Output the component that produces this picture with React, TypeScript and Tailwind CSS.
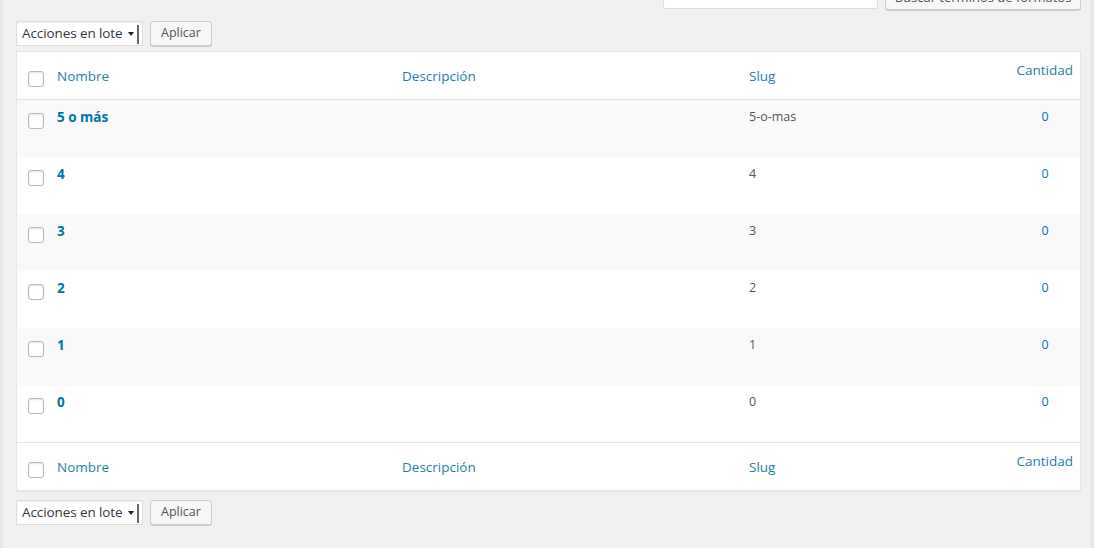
import React from 'react';

const terms = [
  { name: '5 o más', slug: '5-o-mas', count: 0 },
  { name: '4', slug: '4', count: 0 },
  { name: '3', slug: '3', count: 0 },
  { name: '2', slug: '2', count: 0 },
  { name: '1', slug: '1', count: 0 },
  { name: '0', slug: '0', count: 0 },
];

const cols = 'grid grid-cols-[31px_345px_347px_268px_74px]';

function Checkbox() {
  return <span className="block h-4 w-4 rounded-[3px] border border-[#b4b9be] bg-white shadow-[inset_0_1px_2px_rgba(0,0,0,0.1)]" />;
}

function BulkActions() {
  return (
    <div className="flex items-center gap-[7px]">
      <div className="relative flex h-[25px] w-[127px] items-center border border-[#ddd] bg-white pl-[5px] text-[13.5px] tracking-[-0.1px] text-[#32373c] shadow-[inset_0_1px_2px_rgba(0,0,0,0.07)]">
        Acciones en lote
        <span className="absolute right-[8px] top-[10px] h-0 w-0 border-x-[3px] border-t-[4px] border-x-transparent border-t-[#222]" />
        <span className="absolute right-[3px] top-[3px] h-[19px] w-[2px] bg-[#666]" />
      </div>
      <button className="h-[25px] rounded-[3px] border border-[#ccc] bg-[#f7f7f7] px-[10px] text-[12.5px] text-[#555] shadow-[0_1px_0_#ccc]">
        Aplicar
      </button>
    </div>
  );
}

function HeaderRow({ bottom }: { bottom?: boolean }) {
  return (
    <div className={`${cols} h-[48px] text-[13.5px] text-[#1f7fa6] ${bottom ? 'border-t border-[#e1e1e1]' : 'border-b border-[#e1e1e1]'}`}>
      <div className="flex items-start pl-[11px] pt-[19px]">
        <Checkbox />
      </div>
      <div className="pl-[9px] pt-[14px]">Nombre</div>
      <div className="pl-[9px] pt-[14px]">Descripción</div>
      <div className="pl-[9px] pt-[14px]">Slug</div>
      <div className="pr-[9px] pt-[8px] text-right">Cantidad</div>
    </div>
  );
}

export default function App() {
  return (
    <div className="h-[548px] w-[1094px] overflow-hidden border-l-[3px] border-r-[4px] border-[#e8e8e8] bg-[#f1f1f1] font-['Open_Sans','Noto_Sans',sans-serif]">
      <div className="ml-[13px] mr-[9px]">
        <div className="-mt-[21px] flex h-[31px] justify-end gap-[7px]">
          <div className="h-[30px] w-[215px] border border-[#ddd] bg-white shadow-[inset_0_1px_2px_rgba(0,0,0,0.07)]" />
          <button className="h-[31px] w-[196px] overflow-hidden rounded-[3px] border border-[#ccc] bg-[#f7f7f7] pt-[2px] text-[13px] leading-[30px] text-[#555] shadow-[0_1px_0_#ccc]">
            Buscar términos de formatos
          </button>
        </div>
        <div className="mt-[11px]">
          <BulkActions />
        </div>
        <div className="mt-[5px] w-[1065px] border border-[#e5e5e5] bg-white shadow-[0_1px_1px_rgba(0,0,0,0.04)]">
          <HeaderRow />
          {terms.map((t, i) => (
            <div key={t.slug} className={`${cols} h-[57px] ${i % 2 === 0 ? 'bg-[#f9f9f9]' : 'bg-white'}`}>
              <div className="pl-[11px] pt-[13px]">
                <Checkbox />
              </div>
              <div className="pl-[9px] pt-[7px] text-[13.5px] font-bold text-[#0073aa]">{t.name}</div>
              <div />
              <div className="pl-[9px] pt-[8px] text-[12.5px] text-[#555]">{t.slug}</div>
              <div className="pt-[8px] text-center text-[12.5px] text-[#0073aa]">{t.count}</div>
            </div>
          ))}
          <HeaderRow bottom />
        </div>
        <div className="mt-[9px]">
          <BulkActions />
        </div>
      </div>
    </div>
  );
}
